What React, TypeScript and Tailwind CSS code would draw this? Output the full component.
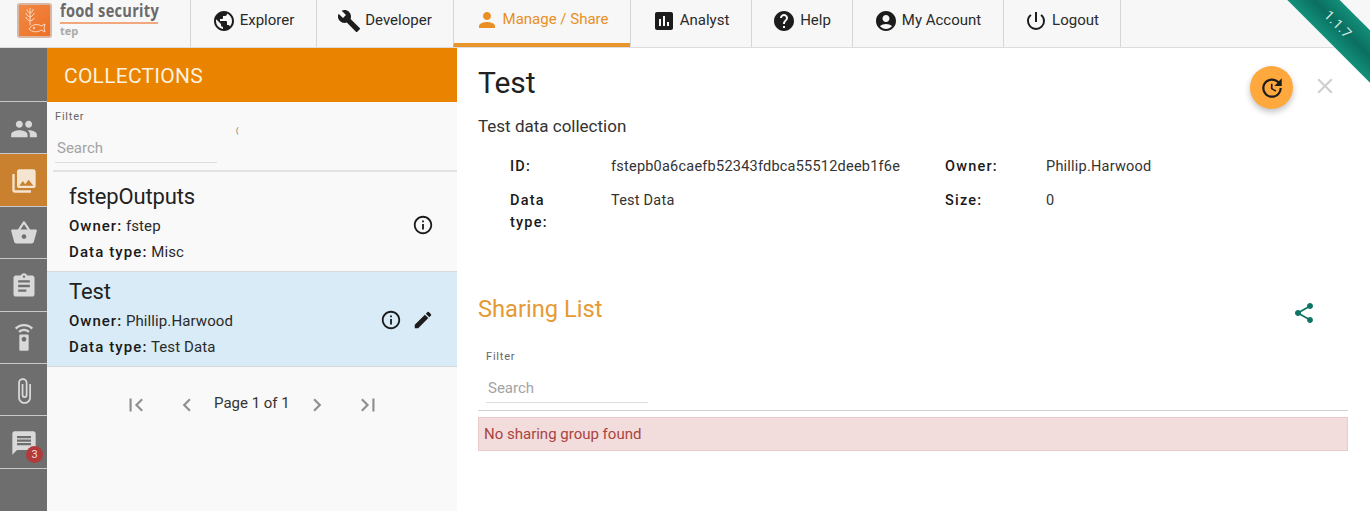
import {
  MdPublic,
  MdBuild,
  MdPerson,
  MdAssessment,
  MdHelp,
  MdAccountCircle,
  MdPowerSettingsNew,
  MdPeople,
  MdPhotoLibrary,
  MdShoppingBasket,
  MdAssignment,
  MdSettingsRemote,
  MdAttachFile,
  MdMessage,
  MdInfoOutline,
  MdEdit,
  MdShare,
  MdUpdate,
  MdClose,
  MdFirstPage,
  MdLastPage,
  MdChevronLeft,
  MdChevronRight,
} from "react-icons/md"

const tabs = [
  { label: "Explorer", icon: MdPublic, width: "w-[126px]" },
  { label: "Developer", icon: MdBuild, width: "w-[137px]" },
  { label: "Manage / Share", icon: MdPerson, width: "w-[177px]", active: true },
  { label: "Analyst", icon: MdAssessment, width: "w-[121px]" },
  { label: "Help", icon: MdHelp, width: "w-[101px]" },
  { label: "My Account", icon: MdAccountCircle, width: "w-[151px]" },
  { label: "Logout", icon: MdPowerSettingsNew, width: "w-[117px]" },
]

const sideItems = [
  { icon: MdPeople },
  { icon: MdPhotoLibrary, active: true },
  { icon: MdShoppingBasket },
  { icon: MdAssignment },
  { icon: MdSettingsRemote },
  { icon: MdAttachFile },
  { icon: MdMessage, badge: "3" },
]

function Logo() {
  return (
    <div className="w-[190px] shrink-0 flex pl-[17px] pt-[3px]">
      <div className="w-[35px] h-[35px] rounded-[3px] border-[2px] border-[#d8b8a4] bg-gradient-to-br from-[#f08a45] to-[#ee6f22]">
        <svg viewBox="0 0 31 31" className="w-full h-full" fill="none" stroke="#fde3d0" strokeWidth="0.9">
          <path d="M11 3v17M11 8c-3-1-3-3-3-4M11 8c3-1 3-3 3-4M11 12c-3-1-4-3-4-4M11 12c3-1 4-3 4-4M11 16c-3-1-4-3-4-4M11 16c3-1 4-2 4-3" />
          <path d="M10 24c2-4 8-6 12-3l4-2-1 4 1 4-4-2c-4 3-9 2-12-1z" />
          <circle cx="15" cy="23" r="0.8" />
        </svg>
      </div>
      <div className="ml-[8px] w-[98px] -mt-[2px]">
        <div className="font-['Open_Sans',sans-serif] font-bold text-[17px] leading-[20px] h-[20px] text-[#6a6a6a] whitespace-nowrap tracking-[0.3px] [transform:scaleX(0.86)] origin-left">
          food security
        </div>
        <div className="h-[2px] bg-[#f3a77c] mt-[1px]" />
        <div className="font-['Open_Sans',sans-serif] font-bold text-[11px] leading-[14px] text-[#a9a9a9]">
          tep
        </div>
      </div>
    </div>
  )
}

function Header() {
  return (
    <div className="h-[48px] shrink-0 flex bg-[#f7f7f7] border-b border-[#dcdcdc]">
      <Logo />
      {tabs.map((tab) => (
        <div
          key={tab.label}
          className={`${tab.width} shrink-0 h-[47px] flex items-center justify-center gap-[4px] border-l border-[#d6d6d6] pb-[6px] pr-[1px] text-[15px] ${
            tab.active ? "text-[#e98f24] border-b-[4px] border-b-[#e8962c] pt-[2px]" : "text-[#2a2a2a]"
          }`}
        >
          <tab.icon size={24} className={tab.active ? "text-[#e98f24]" : "text-[#1c1c1c]"} />
          <span>{tab.label}</span>
        </div>
      ))}
      <div className="w-px h-[47px] bg-[#d6d6d6]" />
    </div>
  )
}

function Sidebar() {
  return (
    <div className="w-[47px] shrink-0 bg-[#6e6e6e] flex flex-col">
      <div className="h-[54px] shrink-0 border-b border-[#c9c9c9]" />
      {sideItems.map((item, i) => (
        <div
          key={i}
          className={`relative h-[52.4px] shrink-0 flex items-center justify-center border-b border-[#c9c9c9] pt-[2px] ${
            item.active ? "bg-[#c9812f]" : ""
          }`}
        >
          <item.icon size={28} className={item.active ? "text-[#f5e4cf]" : "text-[#d9d9d9]"} />
          {item.badge && (
            <span className="absolute left-[26px] top-[30px] w-[17px] h-[17px] rounded-full bg-[#b23a3a] text-[#f3d9d9] text-[11px] leading-[17px] text-center">
              {item.badge}
            </span>
          )}
        </div>
      ))}
    </div>
  )
}

function Filter({ width }: { width: string }) {
  return (
    <div className={width}>
      <div className="text-[11px] leading-[14px] tracking-[0.8px] text-[#666666]">Filter</div>
      <div className="mt-[11.5px] h-[27.5px] text-[15px] leading-[24px] text-[#a3a3a3] border-b border-[#dddddd] pl-[2px]">
        Search
      </div>
    </div>
  )
}

function CollectionItem({
  title,
  owner,
  dataType,
  selected,
}: {
  title: string
  owner: string
  dataType: string
  selected?: boolean
}) {
  return (
    <div
      className={`relative pl-[22px] border-b border-[#d5d9dc] text-[#2a2a2a] ${
        selected ? "h-[95px] bg-[#d9ebf6] pt-[5px]" : "h-[100px] pt-[10px]"
      }`}
    >
      <div className="text-[22px] leading-[30px] tracking-[-0.15px] text-[#222222]">{title}</div>
      <div className="mt-[1px] text-[15px] leading-[26px] tracking-[0.1px]">
        <span className="font-medium text-[#1a1a1a] tracking-[1px]">Owner:</span> {owner}
      </div>
      <div className="text-[15px] leading-[26px] tracking-[0.1px]">
        <span className="font-medium text-[#1a1a1a] tracking-[1.1px]">Data type:</span> {dataType}
      </div>
      <div
        className={`absolute right-[23px] flex items-center gap-[10px] text-[#1c1c1c] ${
          selected ? "top-[37px]" : "top-[42px]"
        }`}
      >
        <MdInfoOutline size={22} />
        {selected && <MdEdit size={22} />}
      </div>
    </div>
  )
}

function ListPanel() {
  return (
    <div className="w-[410px] shrink-0 bg-[#f9f9f9] flex flex-col">
      <div className="h-[54px] shrink-0 bg-[#e98300] flex items-center pl-[17px] pt-[3px] text-[21px] tracking-[0.25px] text-[#fdf1de]">
        COLLECTIONS
      </div>
      <div className="h-[70px] shrink-0 ml-[6px] border-b-[2px] border-[#e3e3e3] pl-[2px] pt-[8px] flex">
        <Filter width="w-[162px]" />
        <span className="ml-[19px] mt-[14px] text-[7px] leading-[14px] text-[#555555]">(</span>
      </div>
      <CollectionItem title="fstepOutputs" owner="fstep" dataType="Misc" />
      <CollectionItem title="Test" owner="Phillip.Harwood" dataType="Test Data" selected />
      <div className="flex items-center pl-[76px] pt-[24px] text-[#8f8f8f]">
        <MdFirstPage size={26} />
        <MdChevronLeft size={26} className="ml-[25px]" />
        <span className="ml-[14px] text-[15px] leading-[24px] text-[#333333] pb-[3px]">Page 1 of 1</span>
        <MdChevronRight size={26} className="ml-[14px]" />
        <MdLastPage size={26} className="ml-[25px]" />
      </div>
    </div>
  )
}

function DetailPanel() {
  return (
    <div className="flex-1 bg-white pl-[21px] pr-[22px] relative">
      <div className="flex items-start justify-between h-[66px] pt-[17px]">
        <h1 className="text-[30px] leading-[36px] text-[#212121]">Test</h1>
        <div className="flex items-center mt-[1px] mr-[10px] gap-[19px]">
          <div className="w-[43px] h-[43px] rounded-full bg-[#ffa83d] shadow-[0_3px_6px_rgba(0,0,0,0.25)] flex items-center justify-center text-[#1c1c1c]">
            <MdUpdate size={26} />
          </div>
          <MdClose size={26} className="text-[#cfcfcf] -mt-[3px]" />
        </div>
      </div>
      <p className="text-[17px] leading-[24px] text-[#333333]">Test data collection</p>

      <div className="mt-[18px] ml-[32px] grid grid-cols-[101px_334px_101px_1fr] text-[14.5px] leading-[22px] tracking-[0.23px] text-[#333333]">
        <div className="font-medium text-[#1a1a1a] tracking-[1.2px] h-[34px]">ID:</div>
        <div>fstepb0a6caefb52343fdbca55512deeb1f6e</div>
        <div className="font-medium text-[#1a1a1a] tracking-[1.2px]">Owner:</div>
        <div>Phillip.Harwood</div>
        <div className="font-medium text-[#1a1a1a] tracking-[1.2px] w-[50px]">Data type:</div>
        <div>Test Data</div>
        <div className="font-medium text-[#1a1a1a] tracking-[1.2px]">Size:</div>
        <div>0</div>
      </div>

      <div className="mt-[55px] flex items-center justify-between h-[40px]">
        <h2 className="text-[23.7px] leading-[32px] text-[#e59a33]">Sharing List</h2>
        <MdShare size={24} className="text-[#0d7565] mr-[32px] mt-[8px]" />
      </div>

      <div className="mt-[21px] pb-[7px] pl-[8px] border-b border-[#d2d2d2]">
        <Filter width="w-[162px]" />
      </div>
      <div className="mt-[6px] h-[34px] bg-[#f3dcdc] border border-[#ebcccc] pl-[5px] text-[15px] leading-[32px] text-[#a94442]">
        No sharing group found
      </div>
    </div>
  )
}

export default function App() {
  return (
    <div className="relative w-full h-[511px] overflow-hidden flex flex-col font-['Roboto',sans-serif]">
      <Header />
      <div className="flex-1 flex min-h-0">
        <Sidebar />
        <ListPanel />
        <DetailPanel />
      </div>
      <div className="absolute left-[1250px] top-[18px] w-[200px] h-[37px] rotate-45 bg-gradient-to-b from-[#12907a] via-[#0b6f60] to-[#12907a] flex items-center justify-center pr-[34px] text-[13.5px] tracking-[0.6px] text-[#d5ece6]">
        1.1.7
      </div>
    </div>
  )
}
